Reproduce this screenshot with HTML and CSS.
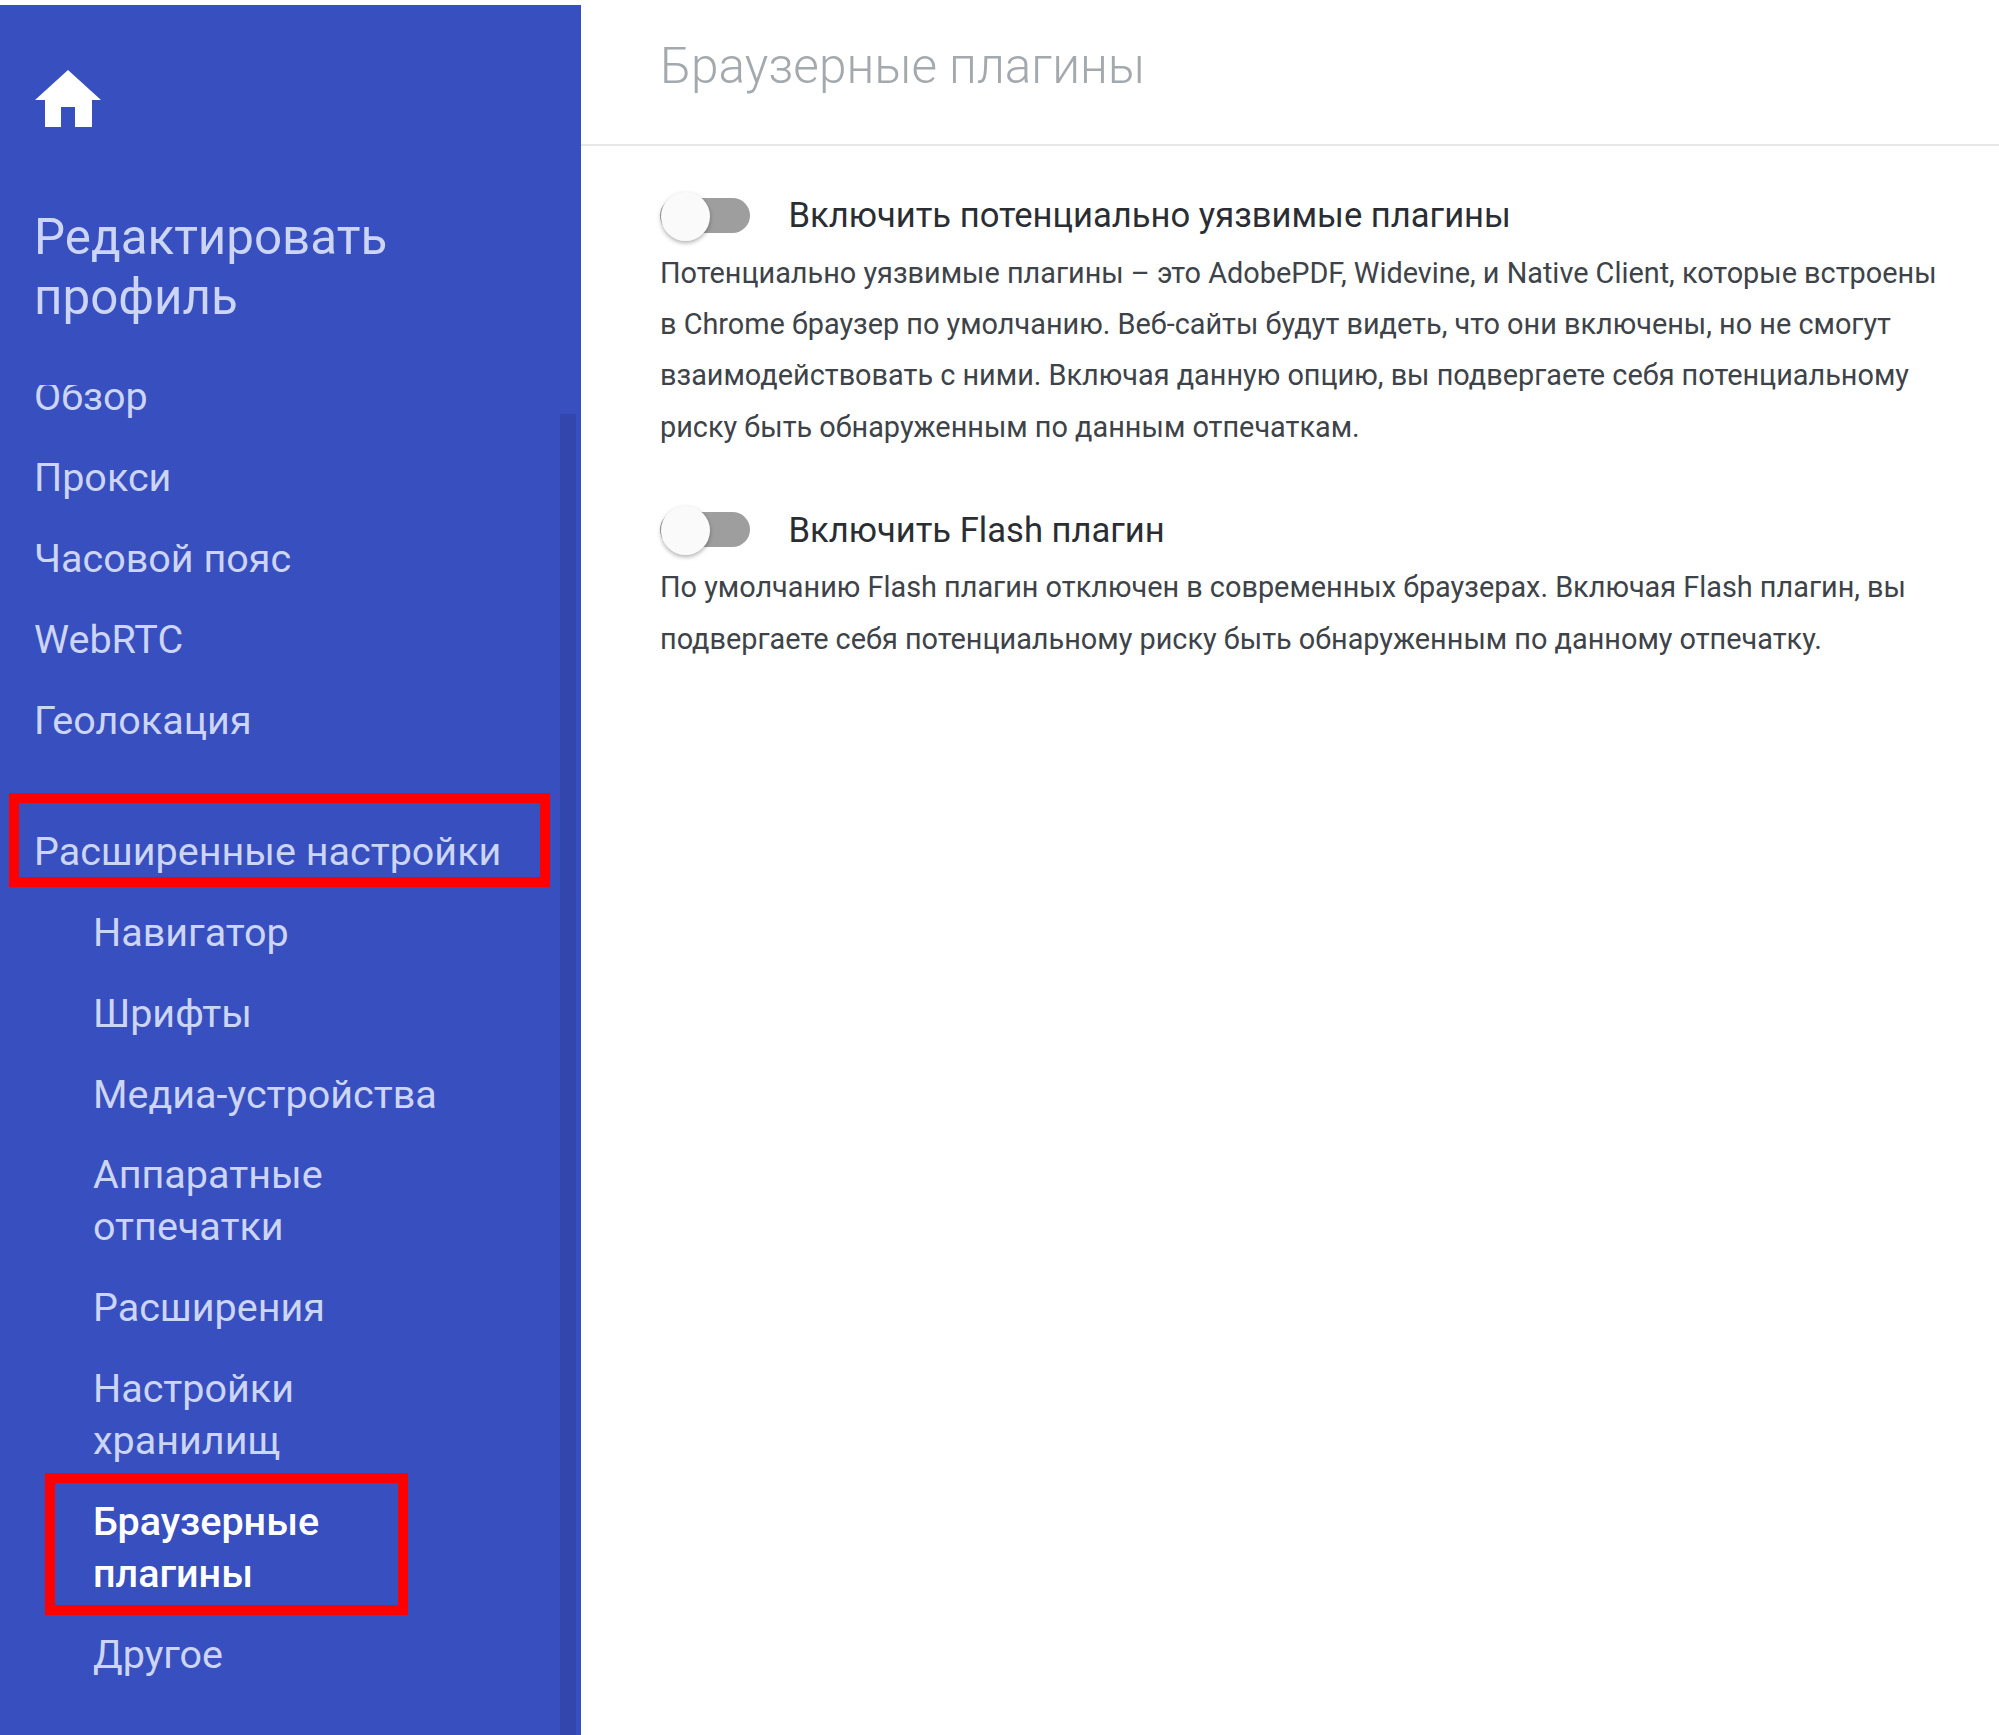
FILE: index.html
```html
<!DOCTYPE html>
<html lang="ru">
<head>
<meta charset="utf-8">
<title>Браузерные плагины</title>
<link rel="stylesheet" href="styles.css">
</head>
<body>
<div class="page">
  <aside class="sidebar">
    <svg class="home" viewBox="0 0 66 57" width="66" height="57"><path d="M33 0 66 30H57V57H40V37H26V57H10V30H0Z" fill="#fff"/></svg>
    <h2 class="profile">Редактировать профиль</h2>
    <nav class="nav">
      <ul class="list list-top">
        <li class="item">Обзор</li>
        <li class="item">Прокси</li>
        <li class="item">Часовой пояс</li>
        <li class="item">WebRTC</li>
        <li class="item">Геолокация</li>
      </ul>
      <div class="section">Расширенные настройки<span class="mark mark-section"></span></div>
      <ul class="list list-sub">
        <li class="item">Навигатор</li>
        <li class="item">Шрифты</li>
        <li class="item">Медиа-устройства</li>
        <li class="item">Аппаратные отпечатки</li>
        <li class="item">Расширения</li>
        <li class="item">Настройки хранилищ</li>
        <li class="item active">Браузерные плагины<span class="mark mark-active"></span></li>
        <li class="item">Другое</li>
      </ul>
    </nav>
    <div class="scroll-thumb"></div>
  </aside>
  <main class="main">
    <header class="topbar"><h1 class="title">Браузерные плагины</h1></header>
    <div class="content">
      <section class="option">
        <div class="option-head"><span class="toggle"><span class="knob"></span></span><span class="label">Включить потенциально уязвимые плагины</span></div>
        <p class="desc">Потенциально уязвимые плагины – это AdobePDF, Widevine, и Native Client, которые встроены в Chrome браузер по умолчанию. Веб-сайты будут видеть, что они включены, но не смогут взаимодействовать с ними. Включая данную опцию, вы подвергаете себя потенциальному риску быть обнаруженным по данным отпечаткам.</p>
      </section>
      <section class="option">
        <div class="option-head"><span class="toggle"><span class="knob"></span></span><span class="label">Включить Flash плагин</span></div>
        <p class="desc">По умолчанию Flash плагин отключен в современных браузерах. Включая Flash плагин, вы подвергаете себя потенциальному риску быть обнаруженным по данному отпечатку.</p>
      </section>
    </div>
  </main>
</div>
</body>
</html>
```
FILE: styles.css
```css
* { box-sizing: border-box; }
html, body { margin: 0; padding: 0; height: 100%; }
body { background: #fff; font-family: Roboto, "Liberation Sans", sans-serif; overflow: hidden; }
.page { display: flex; height: 1735px; padding-top: 5px; }
.sidebar {
  position: relative;
  flex: 0 0 581px;
  background: #384fbf;
  color: #ccd5f4;
  padding: 65px 0 0 34px;
  overflow: hidden;
}
.home { display: block; margin-left: 1px; }
.profile {
  margin: 80px 0 0;
  width: 420px;
  font-size: 49.3px;
  line-height: 60px;
  font-weight: 400;
}
.nav { height: 1400px; margin: 58px 0 0 -34px; padding-left: 34px; overflow: hidden; }
.list { list-style: none; margin: 0; padding: 0; }
.item { position: relative; font-size: 39.5px; line-height: 52px; margin-bottom: 29px; }
.list-sub { padding-left: 59px; width: 420px; }
.list-sub .item { margin-bottom: 28.8px; }
.list-top { margin-top: -14px; }
.section { position: relative; margin-top: 79px; margin-bottom: 29px; font-size: 39.5px; line-height: 52px; }
.active { color: #fff; font-weight: 500; }
.mark { position: absolute; border: 10px solid #f00; }
.mark-section { left: -25px; top: -33px; width: 541px; height: 94px; }
.mark-active { left: -48px; top: -23px; width: 363px; height: 142px; }
.scroll-thumb { position: absolute; left: 560px; top: 409px; bottom: 0; width: 16px; background: #3346ad; }
.main { flex: 1; min-width: 0; }
.topbar { height: 141px; border-bottom: 2px solid #e8e8e8; padding: 33px 0 0 79px; }
.title { margin: 0; font-size: 49.5px; line-height: 56px; font-weight: 300; color: #a4a9ad; }
.content { padding: 44px 42px 0 79px; }
.option { margin-bottom: 51.6px; }
.option-head { display: flex; align-items: center; height: 50px; }
.toggle { position: relative; display: block; width: 90px; height: 35px; border-radius: 18px; background: #9e9e9e; }
.knob { position: absolute; left: 1px; top: -6px; width: 49px; height: 49px; border-radius: 50%; background: #fafafa; box-shadow: 0 2px 4px rgba(0,0,0,.3); }
.label { margin-left: 38.5px; font-size: 34.6px; color: #2a2e33; }
.desc { margin: 7.6px 0 0; font-size: 28.85px; line-height: 51.4px; color: #3d4349; }
```
